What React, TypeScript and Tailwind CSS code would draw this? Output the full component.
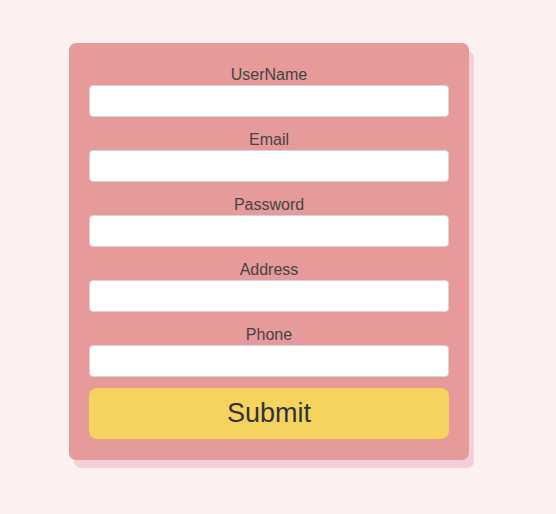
import React from "react";

const fields = ["UserName", "Email", "Password", "Address", "Phone"];

export default function App() {
  return (
    <div className="min-h-[514px] w-full bg-[#fcf0f1] pt-[43px] pl-[69px]" style={{ fontFamily: '"Liberation Sans", Arial, sans-serif' }}>
      <div className="w-[400px] rounded-[7px] bg-[#e69a9a] px-[20px] pt-[23px] pb-[21px] shadow-[5px_8px_0_0_#f3d0d8]">
        <div className="flex flex-col gap-[14px]">
          {fields.map((f) => (
            <div key={f} className="flex flex-col">
              <label className="mb-[1px] block h-[18px] text-center text-[16px] leading-[18px] text-[#444]">{f}</label>
              <input className="h-[32px] w-full rounded-[4px] border border-[#d4d4d4] bg-white px-2 outline-none" />
            </div>
          ))}
        </div>
        <button className="mt-[11px] h-[51px] w-full rounded-[8px] bg-[#f4d35e] text-[27px] leading-[51px] text-[#333]">Submit</button>
      </div>
    </div>
  );
}
